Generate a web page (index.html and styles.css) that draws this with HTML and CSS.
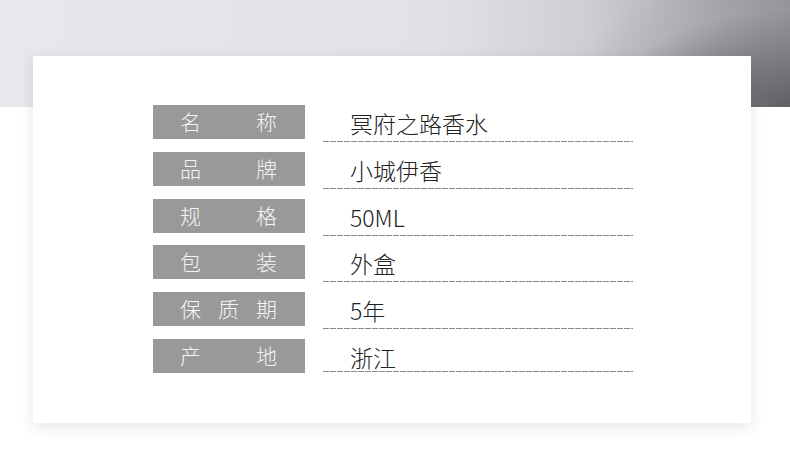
FILE: index.html
```html
<!DOCTYPE html>
<html lang="zh">
<head>
<meta charset="utf-8">
<link rel="stylesheet" href="styles.css">
</head>
<body>
<div class="card">
  <div class="specs">
    <div class="label">名称</div><div class="value">冥府之路香水</div>
    <div class="label">品牌</div><div class="value">小城伊香</div>
    <div class="label">规格</div><div class="value">50ML</div>
    <div class="label">包装</div><div class="value">外盒</div>
    <div class="label">保质期</div><div class="value">5年</div>
    <div class="label">产地</div><div class="value short">浙江</div>
  </div>
</div>
</body>
</html>
```
FILE: styles.css
```css
html, body {
  margin: 0;
  padding: 0;
}
body {
  width: 790px;
  height: 457px;
  overflow: hidden;
  background-color: #ffffff;
  background-image:
    radial-gradient(ellipse 240px 130px at 100% 100%, rgba(95,93,100,0.95) 0%, rgba(120,118,125,0.7) 40%, rgba(170,168,174,0.3) 75%, rgba(220,218,224,0) 100%),
    linear-gradient(90deg, #e9e7eb 0%, #e4e1e6 55%, #cfcdd2 75%, #a3a1a7 92%, #8f8d93 100%);
  background-size: 100% 107px, 100% 107px;
  background-repeat: no-repeat;
  font-family: "Noto Sans CJK SC", "Noto Sans", sans-serif;
}
.card {
  margin: 56px 0 0 33px;
  width: 718px;
  height: 367px;
  background: #ffffff;
  box-shadow: 0 4px 14px rgba(0, 0, 0, 0.10);
  box-sizing: border-box;
  padding: 49px 0 0 120px;
}
.specs {
  display: grid;
  grid-template-columns: 152px 310px;
  column-gap: 18px;
  row-gap: 12.8px;
}
.label {
  height: 34px;
  background: #999999;
  color: #f4f4f4;
  font-size: 21px;
  font-weight: 300;
  line-height: 33px;
  padding: 0 28px 0 27px;
  text-align: justify;
  text-align-last: justify;
}
.value {
  height: 37px;
  box-sizing: border-box;
  padding: 3px 0 0 27px;
  font-size: 23px;
  font-weight: 300;
  line-height: 30px;
  color: #222222;
  background-image: repeating-linear-gradient(90deg, #8a8a8a 0 6px, transparent 6px 7px);
  background-size: 100% 1px;
  background-position: 0 100%;
  background-repeat: no-repeat;
  margin-bottom: -3px;
}
.value.short {
  height: 33px;
  margin-bottom: 1px;
}
```
